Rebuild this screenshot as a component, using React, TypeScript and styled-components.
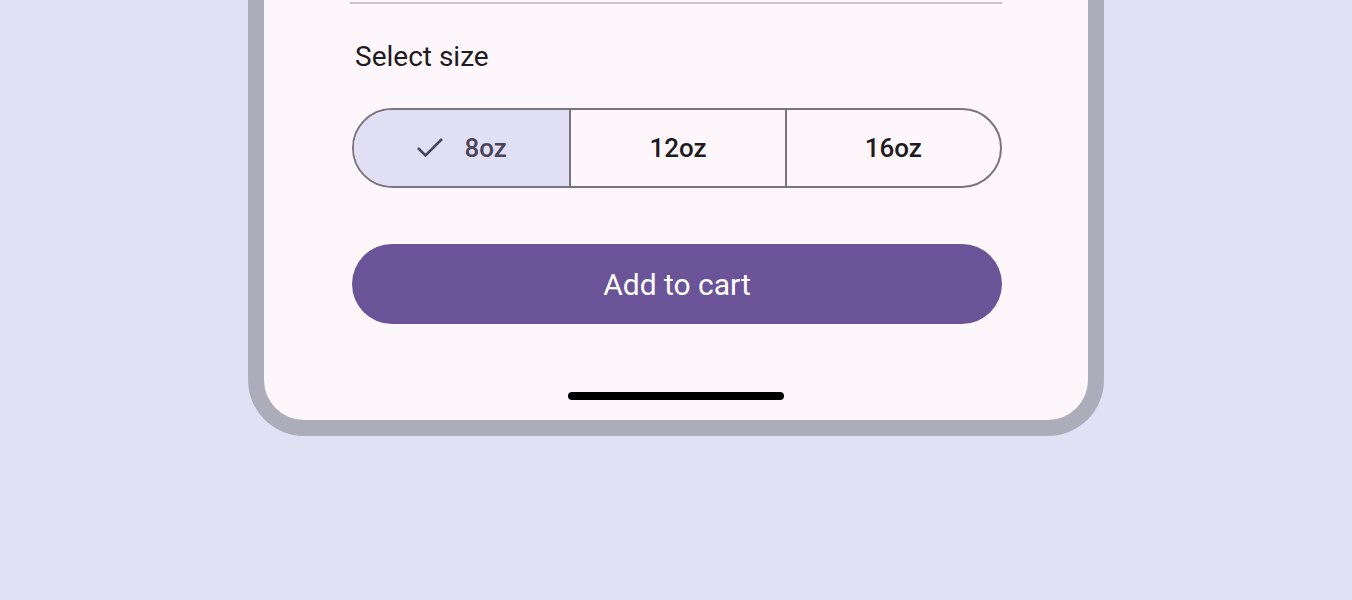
import React, { useState } from "react";
import styled, { createGlobalStyle } from "styled-components";

const Global = createGlobalStyle`
  html, body { margin: 0; padding: 0; background: #E2E0F4; }
  body { font-family: Roboto, "Liberation Sans", sans-serif; }
`;

const Page = styled.div`
  display: flex;
  justify-content: center;
  min-height: 600px;
`;

const Phone = styled.div`
  width: 856px;
  height: 436px;
  box-sizing: border-box;
  border: 16px solid #ACACBA;
  border-top: 0;
  border-radius: 0 0 56px 56px;
  background: #ACACBA;
`;

const Screen = styled.div`
  height: 100%;
  box-sizing: border-box;
  background: #FDF7FC;
  border-radius: 0 0 40px 40px;
  padding: 2px 86px 20px 86px;
  display: flex;
  flex-direction: column;
`;

const Divider = styled.div`
  height: 2px;
  background: #CAC4D0;
`;

const Label = styled.div`
  margin: 37px 0 0 5px;
  font-size: 28px;
  line-height: 32px;
  color: #1D1B20;
`;

const Segmented = styled.div`
  margin: 35px 0 0 2px;
  height: 80px;
  box-sizing: border-box;
  border: 2px solid #79747E;
  border-radius: 40px;
  display: grid;
  grid-template-columns: 1fr 1fr 1fr;
  overflow: hidden;
`;

const Segment = styled.button<{ $selected: boolean }>`
  all: unset;
  display: flex;
  align-items: center;
  justify-content: center;
  gap: 20px;
  cursor: pointer;
  background: ${(p) => (p.$selected ? "#E0DFF4" : "transparent")};
  color: ${(p) => (p.$selected ? "#4A4459" : "#1D1B20")};
  font-family: Roboto, "Liberation Sans", sans-serif;
  font-size: 26px;
  font-weight: 500;
  & + & { border-left: 2px solid #79747E; }
`;

const CartButton = styled.button`
  all: unset;
  margin: 56px 0 0 2px;
  height: 80px;
  border-radius: 40px;
  background: #6A5497;
  color: #FFFFFF;
  font-family: Roboto, "Liberation Sans", sans-serif;
  font-size: 30px;
  display: flex;
  align-items: center;
  justify-content: center;
  cursor: pointer;
`;

const Spacer = styled.div`
  flex: 1;
`;

const HomeBar = styled.div`
  align-self: center;
  width: 216px;
  height: 8px;
  border-radius: 4px;
  background: #000;
`;

const Check = () => (
  <svg width="28" height="22" viewBox="0 0 28 22" fill="none">
    <polyline points="2,11 9.5,18.5 26,2" stroke="#4A4459" strokeWidth="2.6" />
  </svg>
);

export default function App() {
  const sizes = ["8oz", "12oz", "16oz"];
  const [sel, setSel] = useState(0);
  return (
    <>
      <Global />
      <Page>
        <Phone>
          <Screen>
            <Divider />
            <Label>Select size</Label>
            <Segmented>
              {sizes.map((s, i) => (
                <Segment key={s} $selected={sel === i} onClick={() => setSel(i)}>
                  {sel === i && <Check />}
                  {s}
                </Segment>
              ))}
            </Segmented>
            <CartButton>Add to cart</CartButton>
            <Spacer />
            <HomeBar />
          </Screen>
        </Phone>
      </Page>
    </>
  );
}
